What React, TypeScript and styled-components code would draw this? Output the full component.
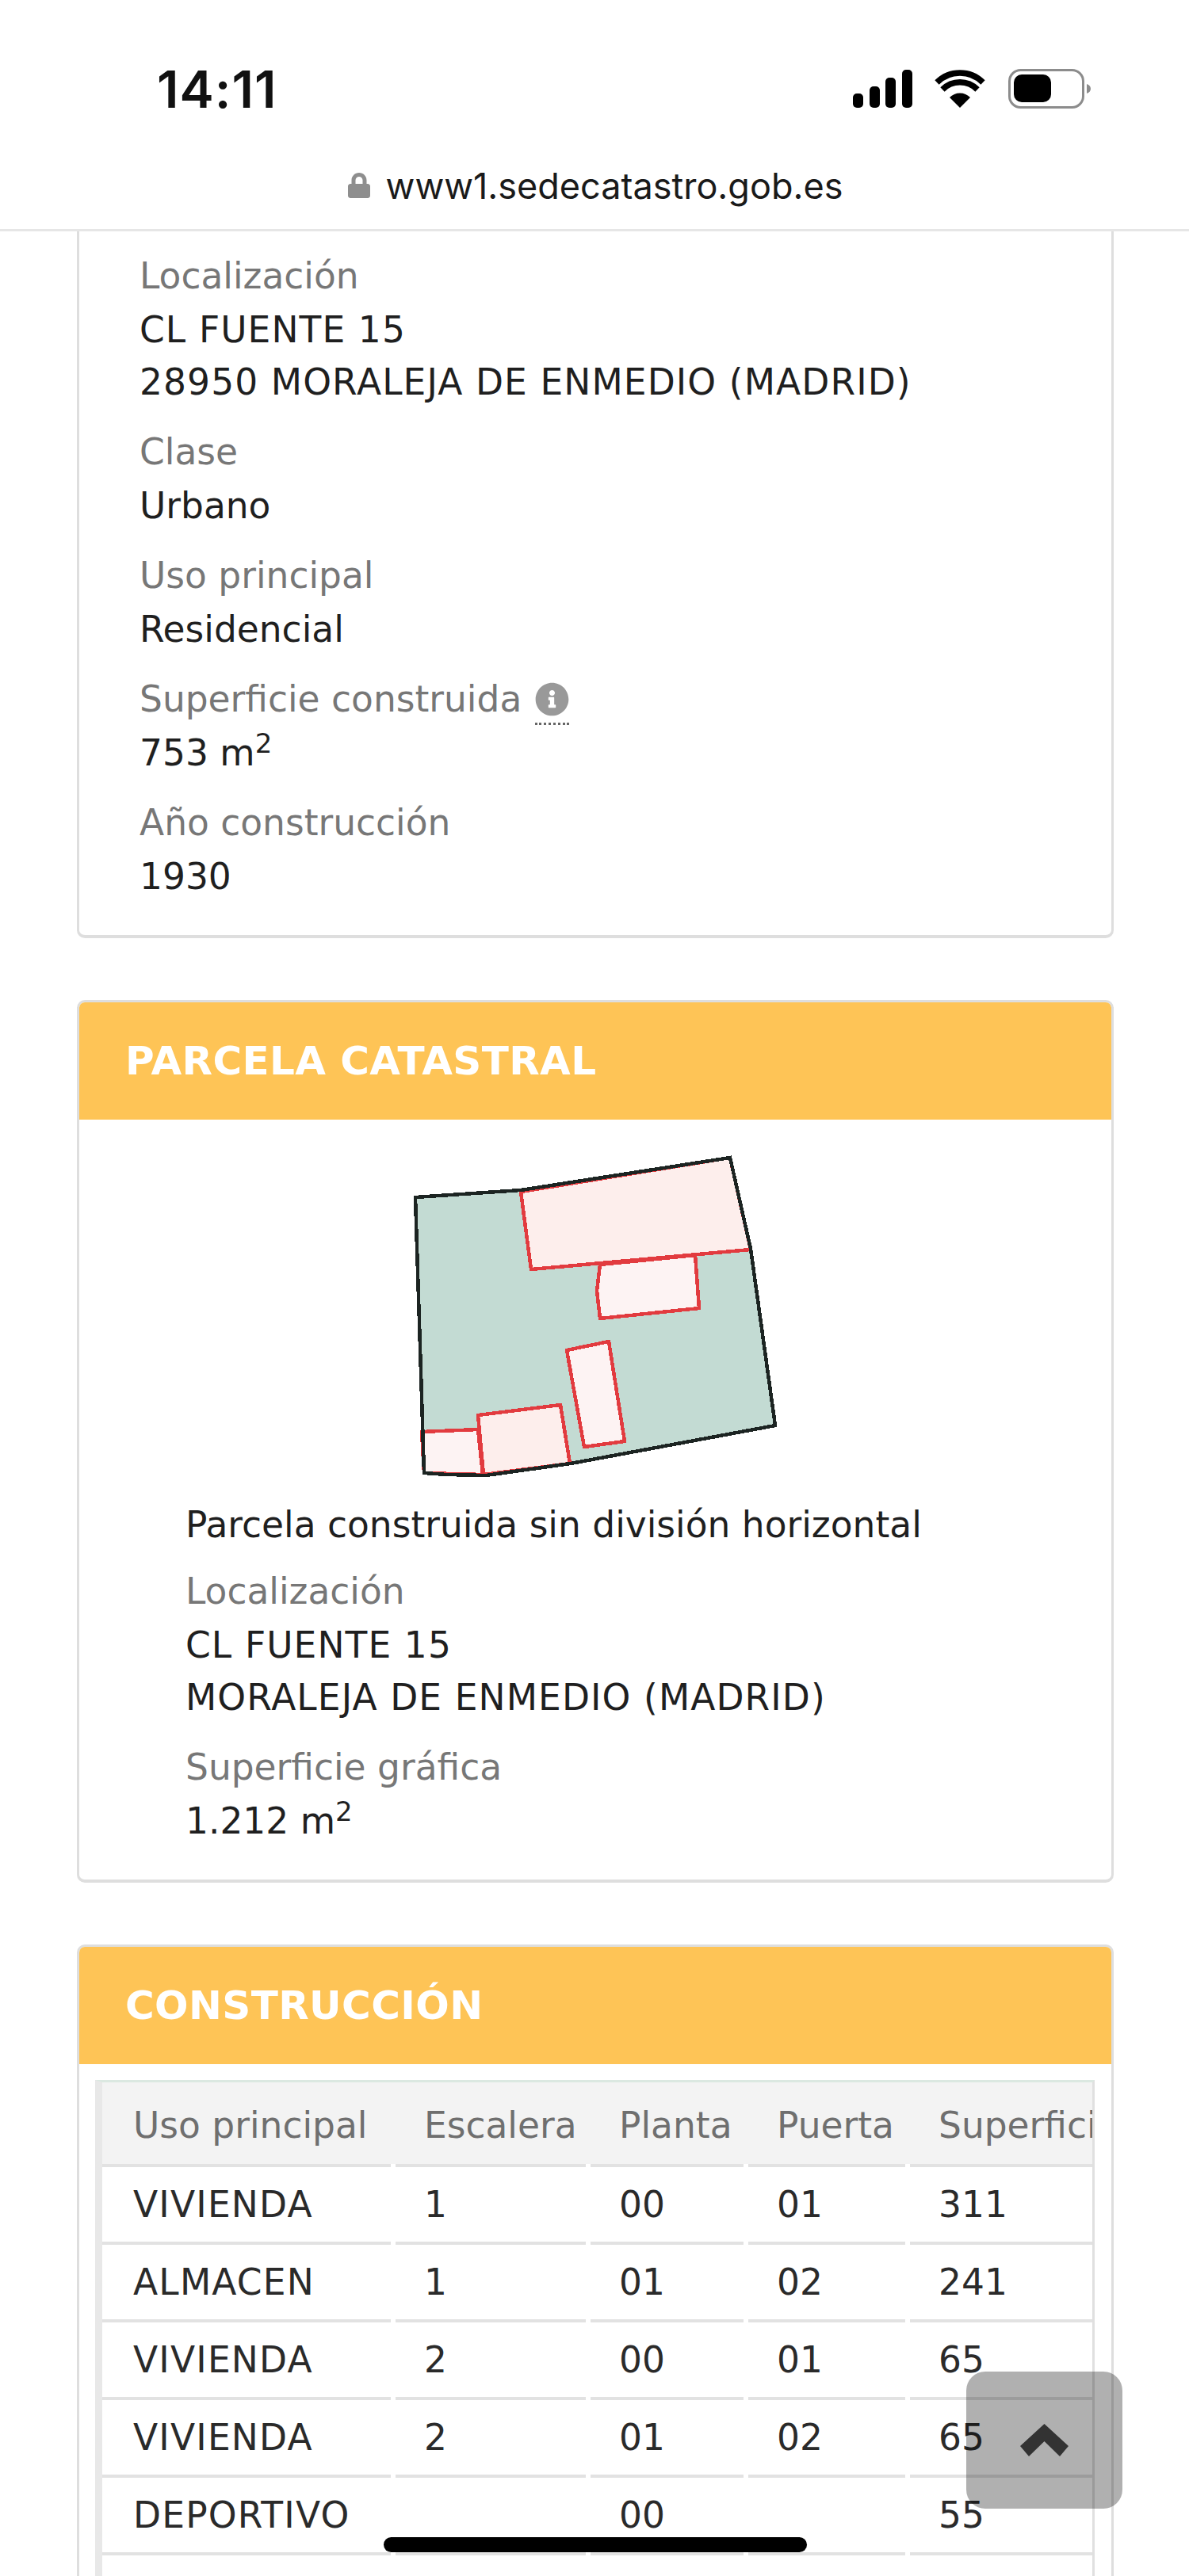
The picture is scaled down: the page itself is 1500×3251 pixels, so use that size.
import React from 'react';
import styled, { createGlobalStyle } from 'styled-components';
import { FaInfoCircle, FaLock } from 'react-icons/fa';

const GlobalStyle = createGlobalStyle`
  html, body {
    margin: 0;
    padding: 0;
    background: #ffffff;
  }
  body {
    height: 3251px;
    overflow: hidden;
    font-family: "DejaVu Sans", Verdana, sans-serif;
  }
`;

const rows = [
  ['VIVIENDA', '1', '00', '01', '311'],
  ['ALMACEN', '1', '01', '02', '241'],
  ['VIVIENDA', '2', '00', '01', '65'],
  ['VIVIENDA', '2', '01', '02', '65'],
  ['DEPORTIVO', '', '00', '', '55'],
  ['', '', '', '', ''],
];

const StatusIcons = () => (
  <svg width="310" height="52" viewBox="0 0 310 52">
    <g fill="#000">
      <rect x="0" y="31" width="13" height="18" rx="5" />
      <rect x="21" y="22" width="13" height="27" rx="5" />
      <rect x="41" y="11" width="13" height="38" rx="5" />
      <rect x="62" y="1" width="13" height="48" rx="5" />
      <path d="M135 49l-13-13a18 18 0 0 1 26 0z" />
    </g>
    <g fill="none" stroke="#000" strokeWidth="7.5">
      <path d="M113 26a31 31 0 0 1 44 0" />
      <path d="M106 17a41 41 0 0 1 58 0" />
    </g>
    <rect x="197.5" y="1.5" width="93" height="47" rx="14" fill="none" stroke="#8c8c8c" strokeWidth="3" />
    <rect x="203" y="7" width="47" height="35" rx="10" fill="#000" />
    <path d="M295 19c3 1 5 3 5 6s-2 5-5 6z" fill="#8c8c8c" />
  </svg>
);

const ParcelPlan = () => (
  <svg width="520" height="460" viewBox="0 0 520 460">
    <polygon points="44,82 177,73 441,32 467,147 498,370 240,418 133,433 83,432 55,430" fill="#c3dbd3" />
    <g stroke="#e23b3f" strokeWidth="4.5" shapeRendering="crispEdges" strokeLinejoin="round">
      <polygon points="177,75 441,32 467,148 190,173" fill="#fdeeec" />
      <polygon points="277,167 397,155 402,222 277,235 273,200" fill="#fdf3f3" />
      <polygon points="235,275 288,264 308,390 257,397" fill="#fdf3f3" />
      <polygon points="123,357 227,344 239,418 130,432" fill="#fdeeec" />
      <polygon points="52,378 123,375 129,432 55,430" fill="#fdf3f3" />
    </g>
    <polygon
      points="44,82 177,73 441,32 467,147 498,370 240,418 133,433 83,432 55,430"
      fill="none"
      stroke="#1c2422"
      strokeWidth="4.5"
      shapeRendering="crispEdges"
    />
  </svg>
);

const ChevronUp = () => (
  <svg width="61" height="41" viewBox="0 0 61 41">
    <path d="M30.5 0L61 28L50 41L30.5 22L11 41L0 28Z" fill="#333333" />
  </svg>
);

const App = () => (
  <Page>
    <GlobalStyle />
    <TopBar>
      <StatusRow>
        <Clock>14:11</Clock>
        <StatusIcons />
      </StatusRow>
      <Address>
        <FaLock size={32} color="#8e8e8e" />
        <span>www1.sedecatastro.gob.es</span>
      </Address>
    </TopBar>

    <Main>
      <Card $clipped>
        <CardBody $inset={79} $top={24} $bottom={40}>
          <Field>
            <Label>Localización</Label>
            <Value $caps>CL FUENTE 15</Value>
            <Value $caps>28950 MORALEJA DE ENMEDIO (MADRID)</Value>
          </Field>
          <Field>
            <Label>Clase</Label>
            <Value>Urbano</Value>
          </Field>
          <Field>
            <Label>Uso principal</Label>
            <Value>Residencial</Value>
          </Field>
          <Field>
            <Label>
              Superficie construida{' '}
              <InfoTip>
                <FaInfoCircle size={43} color="#999999" />
              </InfoTip>
            </Label>
            <Value>
              753 m<Sup>2</Sup>
            </Value>
          </Field>
          <Field>
            <Label>Año construcción</Label>
            <Value>1930</Value>
          </Field>
        </CardBody>
      </Card>

      <Card>
        <CardHeader>PARCELA CATASTRAL</CardHeader>
        <CardBody $inset={137} $top={16} $bottom={40}>
          <PlanFrame>
            <ParcelPlan />
          </PlanFrame>
          <PlanCaption>
            <Value>Parcela construida sin división horizontal</Value>
          </PlanCaption>
          <Field>
            <Label>Localización</Label>
            <Value $caps>CL FUENTE 15</Value>
            <Value $caps>MORALEJA DE ENMEDIO (MADRID)</Value>
          </Field>
          <Field>
            <Label>Superficie gráfica</Label>
            <Value>
              1.212 m<Sup>2</Sup>
            </Value>
          </Field>
        </CardBody>
      </Card>

      <Card>
        <CardHeader>CONSTRUCCIÓN</CardHeader>
        <TableFrame>
          <DataTable>
            <colgroup>
              <col width="364" />
              <col width="240" />
              <col width="193" />
              <col width="198" />
              <col width="300" />
            </colgroup>
            <thead>
              <tr>
                <HeadCell>Uso principal</HeadCell>
                <HeadCell>Escalera</HeadCell>
                <HeadCell>Planta</HeadCell>
                <HeadCell>Puerta</HeadCell>
                <HeadCell>Superficie m²</HeadCell>
              </tr>
            </thead>
            <tbody>
              {rows.map((row, i) => (
                <tr key={i}>
                  {row.map((cell, j) => (
                    <BodyCell key={j}>{cell}</BodyCell>
                  ))}
                </tr>
              ))}
            </tbody>
          </DataTable>
        </TableFrame>
      </Card>
    </Main>

    <ScrollTop>
      <ChevronUp />
    </ScrollTop>
    <HomeBar />
  </Page>
);

const Page = styled.div`
  position: relative;
  width: 1500px;
  height: 3251px;
  overflow: hidden;
  background: #ffffff;
`;

const TopBar = styled.header`
  height: 289px;
  border-bottom: 3px solid #e6e6e6;
  box-sizing: content-box;
`;

const StatusRow = styled.div`
  display: flex;
  justify-content: space-between;
  align-items: flex-start;
  padding: 87px 114px 0 198px;
  height: 128px;
  box-sizing: content-box;
  margin-bottom: -1px;
`;

const Clock = styled.div`
  font-family: Inter, "Liberation Sans", sans-serif;
  font-weight: 600;
  font-size: 65px;
  line-height: 52px;
  letter-spacing: 1px;
  color: #111111;
`;

const Address = styled.div`
  display: flex;
  justify-content: center;
  align-items: center;
  gap: 18px;
  height: 40px;
  font-family: Inter, "Liberation Sans", sans-serif;
  font-size: 45px;
  color: #1a1a1a;
`;

const Main = styled.main`
  display: flex;
  flex-direction: column;
  gap: 78px;
  padding: 0 95px 0 97px;
`;

const Card = styled.section<{ $clipped?: boolean }>`
  border: 3px solid #dedede;
  border-top-width: ${(p) => (p.$clipped ? 0 : 3)}px;
  border-radius: ${(p) => (p.$clipped ? '0 0 10px 10px' : '10px')};
  border-bottom-width: 4px;
  overflow: hidden;
  background: #ffffff;
`;

const CardHeader = styled.h2`
  margin: 0;
  height: 148px;
  padding-left: 58px;
  display: flex;
  align-items: center;
  background: #fec456;
  color: #ffffff;
  font-family: "DejaVu Sans", Verdana, sans-serif;
  font-weight: 700;
  font-size: 50px;
  letter-spacing: 0.4px;
`;

const CardBody = styled.div<{ $inset: number; $top: number; $bottom: number }>`
  padding: ${(p) => p.$top}px 20px ${(p) => p.$bottom}px ${(p) => p.$inset - 3}px;
`;

const Field = styled.div`
  margin-bottom: 22px;
  &:last-child {
    margin-bottom: 0;
  }
`;

const PlanCaption = styled(Field)`
  margin-bottom: 18px;
`;

const Label = styled.div`
  font-size: 45.5px;
  line-height: 66px;
  margin-bottom: 2px;
  color: #777777;
  white-space: nowrap;
`;

const Value = styled.div<{ $caps?: boolean }>`
  font-size: 45.5px;
  line-height: 66px;
  color: #1f1f1f;
  letter-spacing: ${(p) => (p.$caps ? '1.1px' : '0')};
`;

const Sup = styled.sup`
  font-size: 34px;
  line-height: 0;
`;

const InfoTip = styled.span`
  display: inline-block;
  vertical-align: -6px;
  margin-left: 2px;
  line-height: 0;
  padding-bottom: 8px;
  border-bottom: 3px dotted #666666;
`;

const PlanFrame = styled.div`
  margin: 0 0 3px 246px;
  line-height: 0;
`;

const TableFrame = styled.div`
  margin: 20px 21px 0 20px;
  border-top: 3px solid #dbe8e1;
  border-left: 9px solid #e8e8e8;
  border-right: 3px solid #e0e0e0;
  overflow: hidden;
`;

const DataTable = styled.table`
  table-layout: fixed;
  width: 1325px;
  margin-left: -6px;
  border-collapse: separate;
  border-spacing: 6px 0;
  background: linear-gradient(#f3f3f3, #f3f3f3) top / 100% 103px no-repeat;
`;

const HeadCell = styled.th`
  height: 97px;
  padding: 6px 0 0 36px;
  text-align: left;
  font-weight: 400;
  font-size: 45.5px;
  white-space: nowrap;
  color: #6f6f6f;
  border-bottom: 4px solid #e2e2e2;
  &:first-child {
    padding-left: 39px;
  }
`;

const BodyCell = styled.td`
  height: 94px;
  padding: 0 0 0 36px;
  font-size: 45.5px;
  color: #2a2a2a;
  border-bottom: 4px solid #e2e2e2;
  &:first-child {
    padding-left: 39px;
    letter-spacing: 1.2px;
  }
`;

const ScrollTop = styled.div`
  position: absolute;
  left: 1219px;
  top: 2993px;
  width: 197px;
  height: 173px;
  display: flex;
  align-items: center;
  justify-content: center;
  border-radius: 24px;
  background: rgba(0, 0, 0, 0.31);
`;

const HomeBar = styled.div`
  position: absolute;
  left: 484px;
  top: 3202px;
  width: 534px;
  height: 19px;
  border-radius: 10px;
  background: #000000;
`;

export default App;
